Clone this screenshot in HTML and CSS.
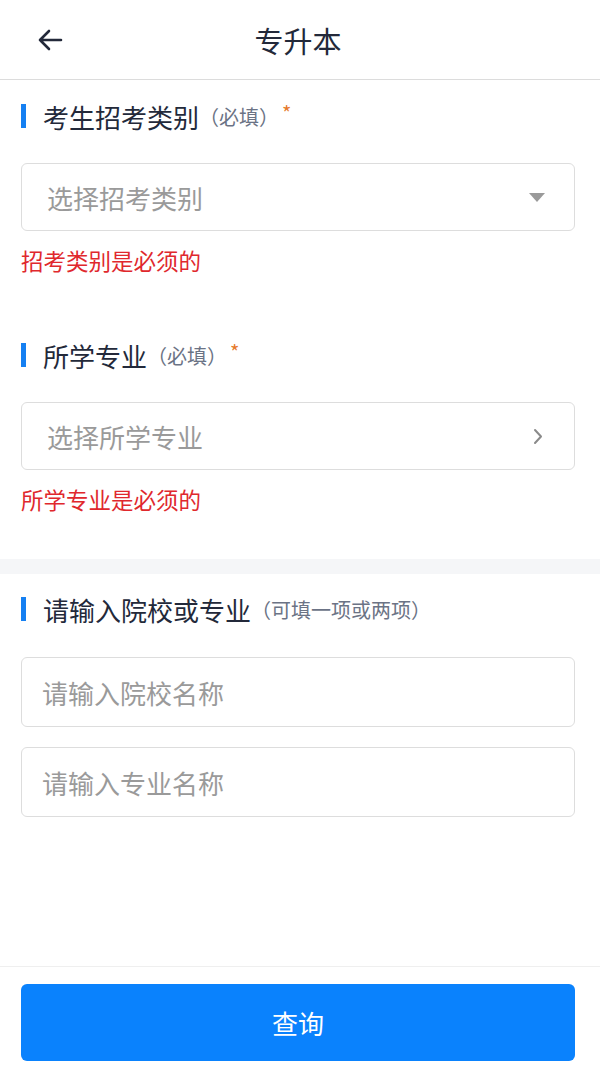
FILE: index.html
```html
<!DOCTYPE html>
<html lang="zh-CN">
<head>
  <meta charset="UTF-8">
  <meta name="viewport" content="width=device-width, initial-scale=1.0">
  <title>专升本</title>
  <link rel="stylesheet" href="styles.css">
</head>
<body>
  <div class="page">
    <div class="header">
      <span class="back">
        <svg width="26" height="22" viewBox="0 0 26 22"><path d="M24 11H3M12 2L3 11l9 9" fill="none" stroke="#23293a" stroke-width="2.6" stroke-linecap="round" stroke-linejoin="round"/></svg>
      </span>
      <h1>专升本</h1>
    </div>

    <div class="main">
      <div class="section">
        <div class="title">考生招考类别<span class="hint">（必填）</span><span class="star">*</span></div>
        <div class="field">
          <span class="placeholder">选择招考类别</span>
          <svg class="caret" width="16" height="9" viewBox="0 0 16 9"><path d="M0 0h16L8 9z" fill="#9a9a9a"/></svg>
        </div>
        <div class="error">招考类别是必须的</div>

        <div class="title second">所学专业<span class="hint">（必填）</span><span class="star">*</span></div>
        <div class="field">
          <span class="placeholder">选择所学专业</span>
          <svg class="arrow" width="10" height="17" viewBox="0 0 10 17"><path d="M2 2l6 6.5L2 15" fill="none" stroke="#8a8a8a" stroke-width="2" stroke-linecap="round" stroke-linejoin="round"/></svg>
        </div>
        <div class="error">所学专业是必须的</div>
      </div>

      <div class="gap"></div>

      <div class="section search">
        <div class="title">请输入院校或专业<span class="hint">（可填一项或两项）</span></div>
        <div class="input"><span class="placeholder">请输入院校名称</span></div>
        <div class="input"><span class="placeholder">请输入专业名称</span></div>
      </div>
    </div>

    <div class="footer">
      <button class="button">查询</button>
    </div>
  </div>
</body>
</html>
```

FILE: styles.css
```css
* { box-sizing: border-box; }
body {
  margin: 0;
  font-family: "Noto Sans CJK SC", "Noto Sans", sans-serif;
  background: #fff;
  color: #23293a;
}
.page {
  min-height: 100vh;
  display: flex;
  flex-direction: column;
}
.header {
  height: 80px;
  border-bottom: 1px solid #dcdcdc;
  display: flex;
  align-items: center;
  justify-content: center;
  position: relative;
}
.header h1 {
  margin: 0;
  font-size: 29px;
  font-weight: 400;
  color: #23293a;
  margin-left: -4px;
}
.back {
  position: absolute;
  left: 37px;
  top: 29px;
  display: flex;
}
.main { flex: 1; }
.section { padding: 18px 25px 45px 21px; }
.title {
  display: flex;
  align-items: center;
  height: 36px;
  font-size: 26px;
  color: #23293a;
}
.title::before {
  content: "";
  width: 5px;
  height: 24px;
  background: #1580f2;
  margin-right: 17px;
}
.title.second { margin-top: 62px; }
.hint {
  font-size: 20px;
  color: #6b7385;
}
.star {
  font-size: 20px;
  color: #e67a2c;
  margin-left: 3px;
  align-self: flex-start;
  margin-top: 0;
}
.field {
  margin-top: 29px;
  height: 68px;
  border: 1px solid #dddddd;
  border-radius: 6px;
  padding: 0 28px 0 25px;
  display: flex;
  align-items: center;
  justify-content: space-between;
}
.placeholder {
  font-size: 26px;
  color: #9a9a9a;
}
.caret { margin-right: 1px; }
.arrow { margin-right: 3px; }
.error {
  margin-top: 14px;
  font-size: 22.5px;
  line-height: 30px;
  color: #e0282d;
}
.gap {
  height: 15px;
  background: #f5f6f8;
}
.search { padding-top: 17px; padding-bottom: 20px; }
.input {
  margin-top: 30px;
  height: 70px;
  border: 1px solid #dddddd;
  border-radius: 6px;
  padding: 0 20px;
  display: flex;
  align-items: center;
}
.input + .input { margin-top: 20px; }
.footer {
  border-top: 1px solid #efefef;
  padding: 17px 25px 17px 21px;
}
.button {
  width: 100%;
  height: 77px;
  border: none;
  border-radius: 6px;
  background: #0a82fd;
  color: #fff;
  font-family: inherit;
  font-size: 26px;
  cursor: pointer;
}
```
